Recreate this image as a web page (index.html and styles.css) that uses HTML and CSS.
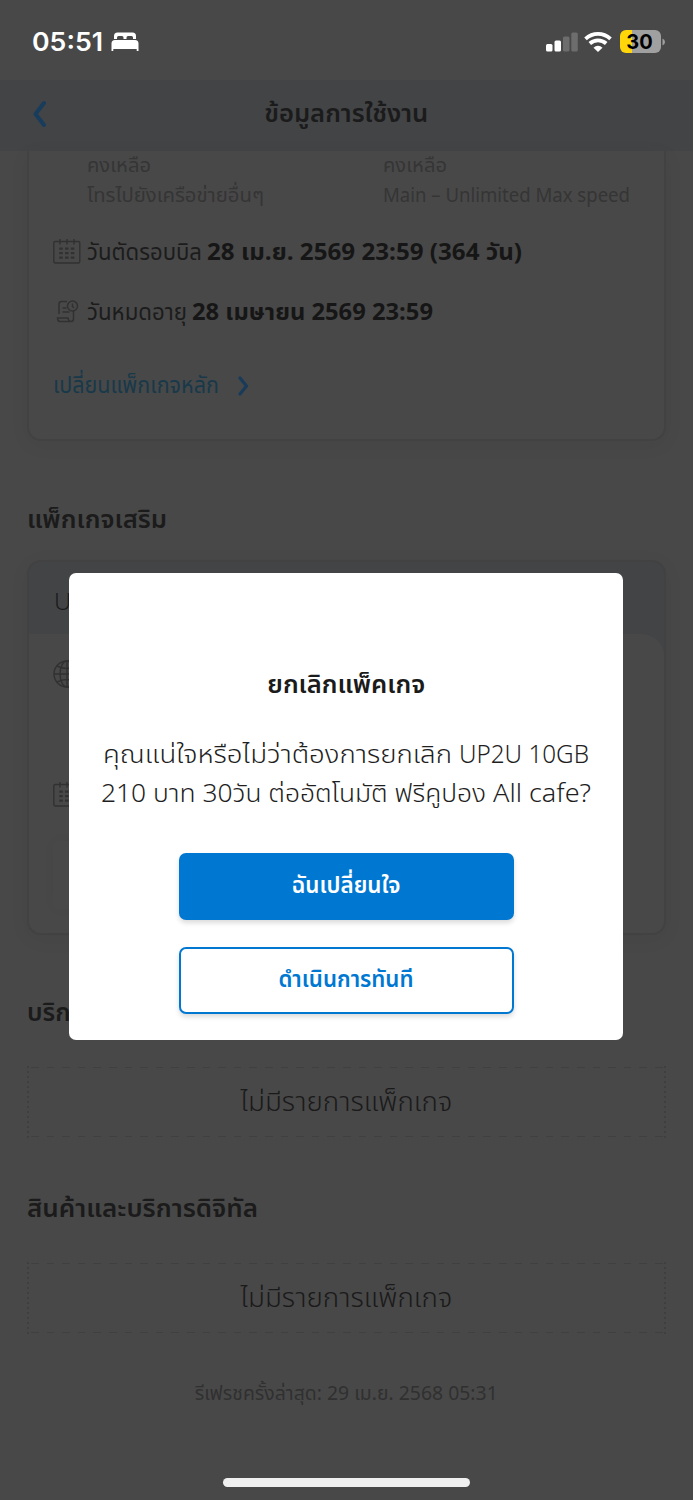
FILE: index.html
```html
<!DOCTYPE html>
<html lang="th">
<head>
<meta charset="utf-8">
<title>ข้อมูลการใช้งาน</title>
<link rel="stylesheet" href="styles.css">
</head>
<body>
<svg class="defs" width="0" height="0">
  <symbol id="calendar" viewBox="0 0 28 26">
    <rect x=".8" y="2.500" width="26" height="21.500" rx="1.500" fill="none" stroke="currentColor" stroke-width="1.400"/>
    <path d="M7 0v5.500M14 0v5.500M21 0v5.500" stroke="currentColor" stroke-width="1.400"/>
    <path d="M6.250 9.700h15.200M6.250 14.200h15.200M6.250 18.700h15.200" stroke="currentColor" stroke-width="2.300" stroke-dasharray="3.500 2.300"/>
  </symbol>
</svg>
<div class="screen">
  <div class="status">
    <div class="status-left">
      <span class="clock"><span class="t" data-w="71">05:51</span></span>
      <svg class="bed" width="28" height="20" viewBox="0 0 28 20" fill="#fff"><path d="M3 7V4Q3 .5 6.500 .5H21.500Q25 .5 25 4V7H22V5.500Q22 4 20.500 4H17Q15.500 4 15.500 5.500V7H12.500V5.500Q12.500 4 11 4H7.500Q6 4 6 5.500V7Z"/><path d="M.5 19V11.500Q.5 8 4 8H24Q27.500 8 27.500 11.500V19H25.700V17H2.300V19Z"/></svg>
    </div>
    <div class="status-right">
      <svg width="32" height="20" viewBox="0 0 32 20"><rect x="0" y="12" width="6.500" height="7.500" rx="1.500" fill="#fff"/><rect x="8.500" y="8.500" width="6.500" height="11" rx="1.500" fill="#fff"/><rect x="17" y="4.500" width="6.500" height="15" rx="1.500" fill="#6d6d6d"/><rect x="25.300" y=".5" width="6.500" height="19" rx="1.500" fill="#6d6d6d"/></svg>
      <svg class="wifi" width="28" height="20" viewBox="0 0 28 20" fill="none" stroke="#fff"><path d="M1.500 6.900Q7 1.900 14 1.900T26.500 6.900" stroke-width="3.800"/><path d="M5.800 11.500Q9.300 8.400 14 8.400T22.200 11.500" stroke-width="3.800"/><path d="M14 20L9.500 15.700Q11.500 13.800 14 13.800T18.500 15.700Z" fill="#fff" stroke="none"/></svg>
      <div class="battery">30</div>
      <svg class="cap" width="4" height="8" viewBox="0 0 4 8"><path d="M.5 .5Q3 1.500 3 4T.5 7.500Z" fill="#a0a0a0"/></svg>
    </div>
  </div>
  <div class="header">
    <svg class="back" width="14" height="28" viewBox="0 0 14 28" fill="none" stroke="#183c5c" stroke-width="4" stroke-linecap="round" stroke-linejoin="round"><path d="M11 3L2.500 14L11 25"/></svg>
    <h1><span class="t" data-w="164">ข้อมูลการใช้งาน</span></h1>
  </div>
  <div class="content">
    <section class="card main-card">
      <div class="usage">
        <div class="usage-col"><p><span class="t" data-w="64">คงเหลือ</span></p><p><span class="t" data-w="177">โทรไปยังเครือข่ายอื่นๆ</span></p></div>
        <div class="usage-col"><p><span class="t" data-w="64">คงเหลือ</span></p><p><span class="t" data-w="247">Main – Unlimited Max speed</span></p></div>
      </div>
      <div class="row"><svg class="ico" width="28" height="26"><use href="#calendar"/></svg><span class="t" data-w="115">วันตัดรอบบิล</span><b><span class="t" data-w="315">28 เม.ย. 2569 23:59 (364 วัน)</span></b></div>
      <div class="row"><svg class="ico" width="28" height="24" viewBox="0 0 28 24" fill="none" stroke="currentColor" stroke-width="1.500"><path d="M6 14V4Q6 1.500 8.500 1.500H14M9.500 8h4M9.500 12h7M20.500 11V19Q20.500 21.500 18 21.500H7Q4.500 21.500 4.500 18H15Q15.500 21.500 18 21.500"/><circle cx="19.500" cy="6" r="5"/><path d="M19.500 3.500V6.500L21 8"/></svg><span class="t" data-w="100">วันหมดอายุ</span><b><span class="t" data-w="241">28 เมษายน 2569 23:59</span></b></div>
      <div class="link"><span class="t" data-w="166">เปลี่ยนแพ็กเกจหลัก</span><svg width="11" height="21" viewBox="0 0 11 21" fill="none" stroke="#183b59" stroke-width="3.200" stroke-linecap="round" stroke-linejoin="round"><path d="M2 2L8.500 10L2 18"/></svg></div>
    </section>
    <h2 class="h-extra"><span class="t" data-w="140">แพ็กเกจเสริม</span></h2>
    <section class="card extra-card">
      <div class="extra-head">UP2U</div>
      <div class="extra-body">
        <svg class="globe" width="28" height="28" viewBox="0 0 28 28" fill="none" stroke="currentColor" stroke-width="1.400"><circle cx="14" cy="14" r="13"/><ellipse cx="14" cy="14" rx="7" ry="13"/><path d="M14 1V27M1 14H27M4 6Q14 11 24 6M4 22Q14 17 24 22"/></svg>
        <svg class="ico" width="28" height="26"><use href="#calendar"/></svg>
        <div class="ghost"></div>
      </div>
    </section>
    <h2 class="h-service"><span class="t">บริการเสริม</span></h2>
    <div class="empty"><span class="t" data-w="212">ไม่มีรายการแพ็กเกจ</span></div>
    <h2 class="h-digital"><span class="t" data-w="231">สินค้าและบริการดิจิทัล</span></h2>
    <div class="empty"><span class="t" data-w="212">ไม่มีรายการแพ็กเกจ</span></div>
    <p class="refresh"><span class="t" data-w="303">รีเฟรชครั้งล่าสุด: 29 เม.ย. 2568 05:31</span></p>
    <div class="home"></div>
  </div>
  <div class="modal">
    <h3><span class="t" data-w="158">ยกเลิกแพ็คเกจ</span></h3>
    <div class="msg">
      <p class="line"><span class="t" data-w="349">คุณแน่ใจหรือไม่ว่าต้องการยกเลิก</span><span class="t" data-w="130">UP2U 10GB</span></p>
      <p class="line"><span class="t" data-w="385">210 บาท 30วัน ต่ออัตโนมัติ ฟรีคูปอง</span><span class="t" data-w="98">All cafe?</span></p>
    </div>
    <button class="btn primary"><span class="t" data-w="109">ฉันเปลี่ยนใจ</span></button>
    <button class="btn"><span class="t" data-w="135">ดำเนินการทันที</span></button>
  </div>
</div>
<script src="fit.js"></script>
</body>
</html>
```

FILE: fit.js
```js
// Condense or widen each label horizontally so it fills its design width.
document.querySelectorAll('.t[data-w]').forEach(function (el) {
  var want = Number(el.dataset.w);
  var have = el.getBoundingClientRect().width;
  var centered = getComputedStyle(el.parentElement).textAlign === 'center';
  el.style.transformOrigin = centered ? 'center' : 'left center';
  el.style.transform = 'scaleX(' + want / have + ')';
  if (!centered) el.style.marginRight = (want - have) + 'px';
});
```

FILE: styles.css
```css
* { box-sizing: border-box; margin: 0; padding: 0; }
body { background: #fff; font-family: "Noto Sans Thai", "Noto Sans", "Open Sans", sans-serif; color: #1a1a1a; }
.defs { display: block; }
.screen { position: relative; width: 693px; height: 1500px; background: #484848; overflow: hidden; }
.t { display: inline-block; white-space: pre; flex: none; }

.status { height: 80px; padding: 0 28px 0 32px; display: flex; justify-content: space-between; color: #fff; }
.status-left, .status-right { display: flex; align-items: center; height: 83px; }
.clock { font: 600 26px/30px Inter, sans-serif; padding-top: 1px; }
.bed { margin-left: 8px; }
.wifi { margin: 0 8px 0 6px; }
.battery { width: 41px; height: 23px; border-radius: 6px; background: linear-gradient(90deg, #ffd60a 12px, #a0a0a0 12px); color: #000; font: 700 20px/24px Inter, sans-serif; text-align: center; padding-right: 2px; }
.status-right { margin-right: -1px; }
.cap { margin-left: 1px; }

.header { height: 71px; background: #434446; display: flex; align-items: center; padding: 0 33px 4px; }
.header h1 { flex: 1; margin-right: 14px; text-align: center; font-size: 25px; line-height: 36px; font-weight: 600; color: #1b1b1c; }

.content { padding: 0 27px; display: flex; flex-direction: column; }
.card { border: 2px solid #424242; box-shadow: 0 4px 20px rgba(0,0,0,.05); }
.main-card { height: 290px; border-top: 0; border-radius: 0 0 14px 14px; padding-left: 24px; }
.usage { display: flex; padding: 0 0 0 34px; color: #353535; font-size: 20px; line-height: 30px; height: 71px; }
.usage-col { width: 296px; flex: none; }
.row { display: flex; align-items: center; gap: 6px; height: 60px; padding-top: 2px; font-size: 23px; line-height: 36px; color: #1c1c1c; }
.row b { color: #161616; margin-left: -1px; }
.ico, .globe { flex: none; color: #313131; }
.row .ico { margin-top: -3px; }
.link { display: flex; align-items: center; gap: 19px; margin-top: 23px; height: 42px; font-size: 23px; color: #18394a; }

h2 { font-size: 25px; font-weight: 600; line-height: 42px; height: 40px; color: #1b1b1b; }
.h-extra { margin-top: 58px; }
.extra-card { height: 375px; margin-top: 21px; border-radius: 14px; overflow: hidden; background: #434446; }
.extra-head { height: 72px; padding: 6px 25px 0; font-size: 24px; font-weight: 350; line-height: 70px; }
.extra-body { height: 301px; border-top-right-radius: 22px; background: #484848; padding: 26px 24px; display: flex; flex-direction: column; }
.extra-body .ico { margin-top: 94px; }
.ghost { margin-top: 33px; height: 68px; width: 540px; border-radius: 6px; box-shadow: 0 0 12px rgba(0,0,0,.04); }
.h-service { margin-top: 57px; }
.empty {
  height: 72px; margin-top: 34px; text-align: center; font-size: 26px; font-weight: 350; line-height: 75px;
  background:
    repeating-linear-gradient(90deg, transparent 0 8px, #404040 8px 15.600px) -4px 1px / 110% 1px no-repeat,
    repeating-linear-gradient(90deg, transparent 0 8px, #404040 8px 15.600px) -4px 70px / 110% 1px no-repeat,
    repeating-linear-gradient(#3f3f3f 0 2px, transparent 2px 5px) left top / 2px 100% no-repeat,
    repeating-linear-gradient(#3f3f3f 0 2px, transparent 2px 5px) right top / 2px 100% no-repeat;
}
.h-digital { margin-top: 50px; }
.refresh { margin-top: 39px; line-height: 42px; height: 40px; font-size: 20px; text-align: center; color: #303030; }
.home { width: 247px; height: 9px; margin: 65px auto 0; border-radius: 5px; background: #f0f0f0; }

.modal { position: absolute; left: 69px; top: 573px; width: 554px; height: 467px; border-radius: 7px; background: #fff; display: flex; flex-direction: column; align-items: center; padding-top: 92px; }
.modal h3 { font-size: 25px; line-height: 40px; font-weight: 600; text-align: center; color: #1b1b1b; }
.msg { margin-top: 31px; height: 78px; font-size: 25px; font-weight: 350; line-height: 39px; color: #1f1f1f; }
.line { display: flex; justify-content: center; gap: 7px; }
.btn { width: 335px; height: 67px; margin-top: 27px; border: 2px solid #0078d2; border-radius: 7px; background: #fff; color: #0078d2; box-shadow: 0 3px 5px rgba(0,0,0,.14); font: 600 23px/58px "Noto Sans Thai", "Noto Sans", sans-serif; text-align: center; padding-bottom: 2px; }
.primary { margin-top: 39px; background: #0078d2; color: #fff; }
```
